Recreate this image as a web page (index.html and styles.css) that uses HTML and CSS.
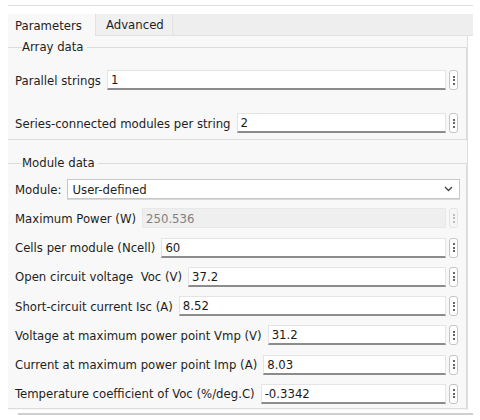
FILE: index.html
```html
<!DOCTYPE html>
<html>
<head>
<meta charset="utf-8">
<link rel="stylesheet" href="styles.css">
</head>
<body>
<div class="topline"></div>
<div class="tabs">
  <div class="tab active">Parameters</div>
  <div class="tab">Advanced</div>
</div>
<div class="panel">
  <fieldset class="group array">
    <legend>Array data</legend>
    <div class="row"><span class="label">Parallel strings</span><span class="field">1</span><span class="menu"><i></i><i></i><i></i></span></div>
    <div class="row"><span class="label">Series-connected modules per string</span><span class="field">2</span><span class="menu"><i></i><i></i><i></i></span></div>
  </fieldset>
  <fieldset class="group module">
    <legend>Module data</legend>
    <div class="row"><span class="label">Module:</span><span class="select">User-defined<svg class="chev" width="9" height="6" viewBox="0 0 9 6"><path d="M1 1 L4.5 4.5 L8 1" fill="none" stroke="#444" stroke-width="1.3"/></svg></span></div>
    <div class="row"><span class="label">Maximum Power (W)</span><span class="field disabled">250.536</span><span class="menu off"><i></i><i></i><i></i></span></div>
    <div class="row"><span class="label">Cells per module (Ncell)</span><span class="field">60</span><span class="menu"><i></i><i></i><i></i></span></div>
    <div class="row"><span class="label">Open circuit voltage&nbsp; Voc (V)</span><span class="field">37.2</span><span class="menu"><i></i><i></i><i></i></span></div>
    <div class="row"><span class="label">Short-circuit current Isc (A)</span><span class="field">8.52</span><span class="menu"><i></i><i></i><i></i></span></div>
    <div class="row"><span class="label">Voltage at maximum power point Vmp (V)</span><span class="field">31.2</span><span class="menu"><i></i><i></i><i></i></span></div>
    <div class="row"><span class="label">Current at maximum power point Imp (A)</span><span class="field">8.03</span><span class="menu"><i></i><i></i><i></i></span></div>
    <div class="row"><span class="label">Temperature coefficient of Voc (%/deg.C)</span><span class="field">-0.3342</span><span class="menu"><i></i><i></i><i></i></span></div>
  </fieldset>
</div>
<div class="bottomline"></div>
</body>
</html>
```
FILE: styles.css
```css
html, body {
  margin: 0;
  padding: 0;
  background: #ffffff;
}
body {
  font-family: "DejaVu Sans Condensed", "DejaVu Sans", sans-serif;
  font-size: 13px;
  color: #1e1e1e;
  width: 480px;
  height: 420px;
  overflow: hidden;
}
.topline {
  margin: 5px 7px 0 8px;
  height: 1px;
  background: #dedede;
}
.tabs {
  margin: 8px 7px 0 8px;
  height: 21px;
  background: #eeeeee;
  display: flex;
  border-bottom: 1px solid #e2e2e2;
}
.tab {
  display: flex;
  align-items: center;
  padding: 0 10px;
  width: 56px;
  border-right: 1px solid #e2e2e2;
  background: #f0f0f0;
}
.tab.active {
  width: 80px;
  padding: 0 0 0 7px;
  background: #f8f8f8;
  margin-bottom: -1px;
}
.panel {
  margin-left: 8px;
  width: 460px;
  height: 374px;
  background: #f8f8f8;
  border-right: 1px solid #dedede;
  padding-top: 4px;
  box-sizing: border-box;
}
.group {
  margin: 0;
  border: 1px solid #dcdcdc;
  border-left: none;
  padding: 0 8px 0 7px;
  display: flex;
  flex-direction: column;
}
.group legend {
  padding: 0 3px 0 0;
  margin-left: 7px;
  line-height: 14px;
}
.array {
  gap: 23px;
  padding-top: 16px;
  padding-bottom: 12px;
  height: 100px;
  box-sizing: border-box;
}
.module {
  margin-top: 16px;
  gap: 9.25px;
  padding-top: 9px;
  padding-bottom: 4px;
}
.row {
  display: flex;
  align-items: center;
  height: 20px;
}
.label {
  white-space: pre;
  margin-right: 6px;
}
.field {
  flex: 1;
  height: 20px;
  box-sizing: border-box;
  background: #ffffff;
  border: 1px solid #e4e4e4;
  border-bottom: 2px solid #8c8c8c;
  padding: 0 3px;
  display: flex;
  align-items: center;
  color: #1a1a1a;
}
.field.disabled {
  background: #efefef;
  border: 1px solid #e8e8e8;
  color: #808080;
}
.menu {
  width: 9px;
  height: 20px;
  box-sizing: border-box;
  margin-left: 3px;
  border: 1px solid #c4c4c4;
  border-radius: 3px;
  background: #fff;
  display: flex;
  flex-direction: column;
  align-items: center;
  justify-content: center;
  gap: 1.5px;
}
.menu i {
  width: 2px;
  height: 2px;
  background: #333;
  border-radius: 1px;
}
.menu.off {
  border-color: #e4e4e4;
  background: #f6f6f6;
}
.menu.off i {
  background: #aaa;
}
.select {
  flex: 1;
  height: 20px;
  box-sizing: border-box;
  margin-right: -2px;
  background: #ffffff;
  border: 1px solid #c8c8c8;
  box-shadow: 0 1px 0 #d8d8d8;
  padding: 0 4px;
  display: flex;
  align-items: center;
  justify-content: space-between;
}
.chev {
  margin-right: 2px;
}
.bottomline {
  margin: 3px 7px 0 18px;
  height: 2px;
  background: #cfcfcf;
}
```
